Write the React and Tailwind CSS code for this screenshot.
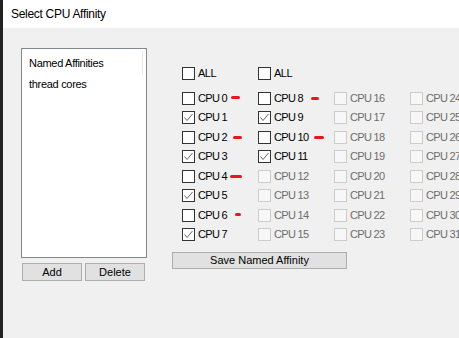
import React from "react"

const font = { fontFamily: '"Liberation Sans", Arial, sans-serif' }

// red hand-drawn marks next to some cpus: [left offset in cell, top offset, width, height]
const marks = {
  0: [49, 4, 9, 3],
  2: [51, 5, 9, 3],
  4: [48, 5, 12, 3],
  6: [53, 4, 6, 3],
  8: [53, 5, 8, 3],
  10: [56, 5, 10, 3],
}

const checked = [1, 3, 5, 7, 9, 11]

function Box({ on, disabled }) {
  return (
    <span
      className={
        "w-[13px] h-[13px] shrink-0 border flex items-center justify-center " +
        (disabled ? "border-[#cccccc] bg-[#f7f7f7]" : "border-[#333333] bg-white")
      }
    >
      {on && (
        <svg width="11" height="11" viewBox="0 0 11 11">
          <polyline points="1.5,5.5 4,8.5 9.5,2" fill="none" stroke="#666" strokeWidth="1" />
        </svg>
      )}
    </span>
  )
}

function Check({ label, on, disabled, mark }) {
  return (
    <div className="relative h-[19.43px] flex items-start w-[76px] shrink-0">
      <div className="flex items-center h-[13px]">
        <Box on={on} disabled={disabled} />
        <span
          className={
            "ml-[3px] text-[11px] leading-none whitespace-nowrap tracking-[-0.7px] " +
            (disabled ? "text-[#6d6d6d]" : "text-black")
          }
        >
          {label}
        </span>
      </div>
      {mark && (
        <span
          className="absolute bg-[#e8161b] rounded-full"
          style={{ left: mark[0], top: mark[1], width: mark[2], height: mark[3] }}
        />
      )}
    </div>
  )
}

export default function App() {
  const cols = [0, 1, 2, 3]
  return (
    <div className="w-[459px] h-[338px] flex overflow-hidden bg-[#f0f0f0]" style={font}>
      <div className="w-[3px] bg-[#222222] shrink-0" />
      <div className="flex-1 flex flex-col min-w-0">
        <div className="h-[28px] bg-white flex items-center pl-[8px] text-[12px] tracking-[-0.3px] text-black shrink-0">
          Select CPU Affinity
        </div>
        <div className="flex-1 flex pt-[20px] pl-[18px]">
          <div className="flex flex-col w-[126px] shrink-0">
            <div className="relative h-[210px] border border-[#828790] bg-white pt-[6px] pl-[7px] text-[11px] tracking-[-0.3px] text-black">
              <div className="h-[21px]">Named Affinities</div>
              <div className="h-[21px]">thread cores</div>
              <span className="absolute right-[3px] top-[2px] w-px h-[23px] bg-[#e6e6e6]" />
            </div>
            <div className="flex gap-[3px] mt-[5px] pl-px">
              <button className="w-[60px] h-[18px] bg-[#e1e1e1] border border-[#adadad] text-[11px] text-black leading-none">
                Add
              </button>
              <button className="w-[60px] h-[18px] bg-[#e1e1e1] border border-[#adadad] text-[11px] text-black leading-none">
                Delete
              </button>
            </div>
          </div>
          <div className="flex flex-col ml-[25px] pt-[19px] min-w-0">
            <div className="flex pl-[10px]">
              {cols.map((c) =>
                c < 2 ? (
                  <div key={c} className="h-[25px] w-[76px] shrink-0 flex items-start">
                    <div className="flex items-center h-[13px]">
                      <Box />
                      <span className="ml-[3px] text-[11px] leading-none tracking-[-0.5px]">ALL</span>
                    </div>
                  </div>
                ) : (
                  <div key={c} className="w-[76px] shrink-0" />
                )
              )}
            </div>
            <div className="flex pl-[10px]">
              {cols.map((c) => (
                <div key={c} className="flex flex-col">
                  {[0, 1, 2, 3, 4, 5, 6, 7].map((r) => {
                    const n = c * 8 + r
                    return (
                      <Check
                        key={n}
                        label={"CPU " + n}
                        on={checked.includes(n)}
                        disabled={n >= 12}
                        mark={marks[n]}
                      />
                    )
                  })}
                </div>
              ))}
            </div>
            <button className="mt-[5px] w-[175px] h-[17px] bg-[#e1e1e1] border border-[#adadad] text-[11px] text-black leading-none">
              Save Named Affinity
            </button>
          </div>
        </div>
      </div>
    </div>
  )
}
